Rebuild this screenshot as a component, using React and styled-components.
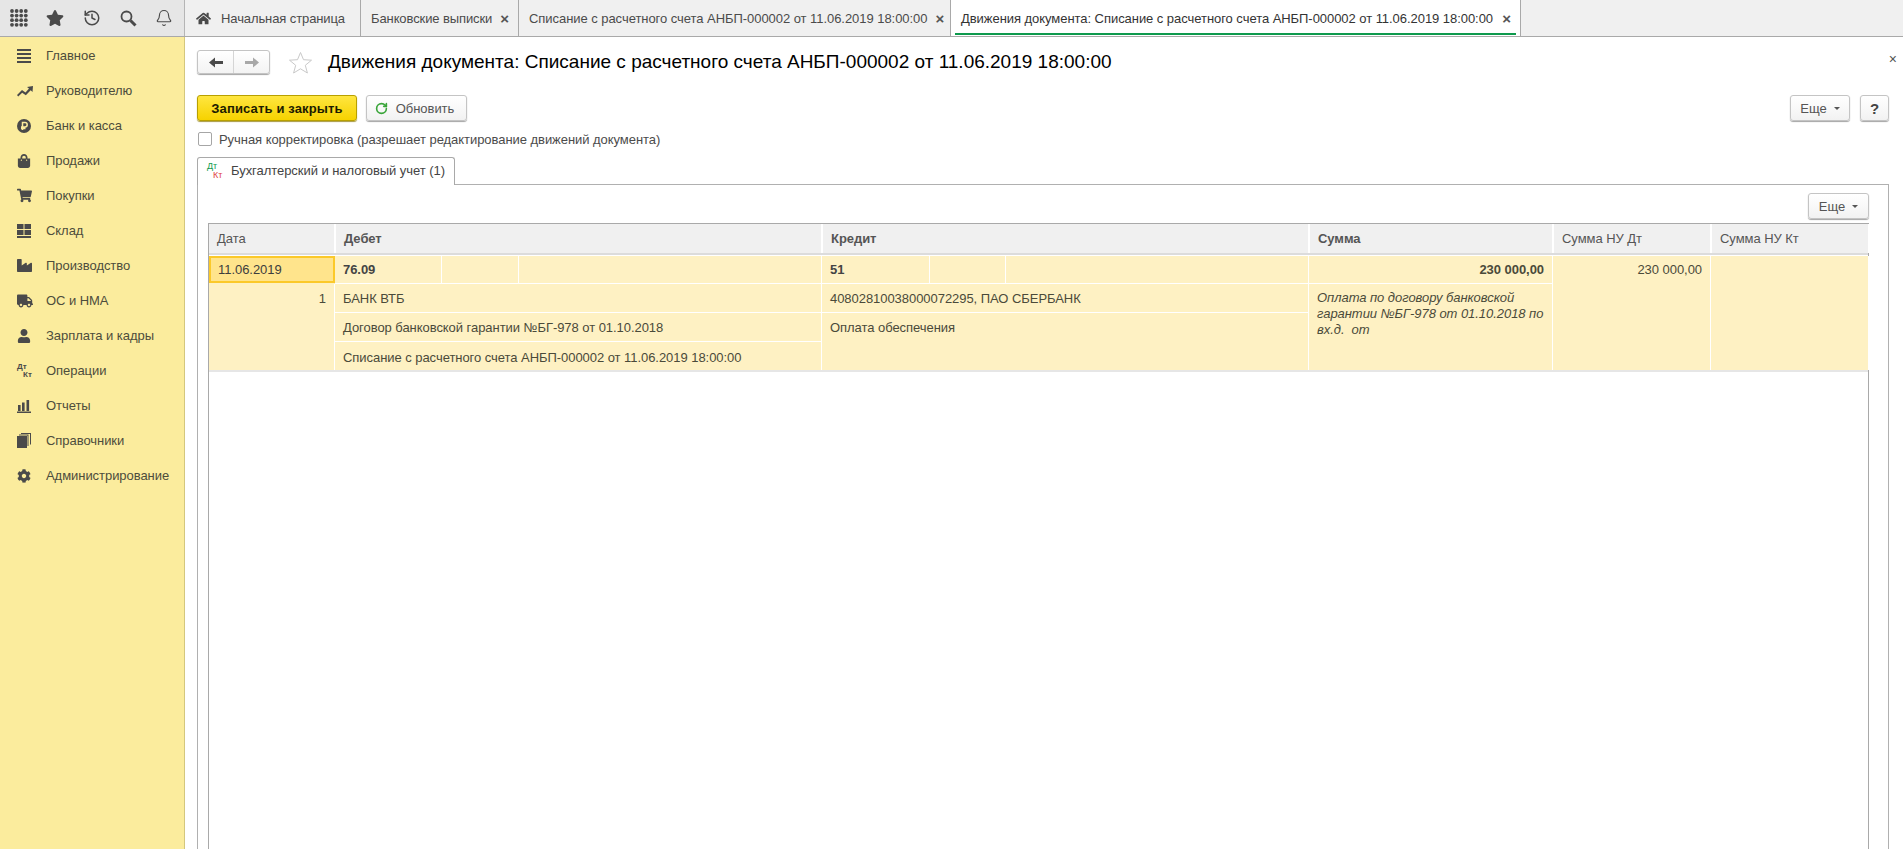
import React from 'react';
import styled, { createGlobalStyle } from 'styled-components';
import { FaStar, FaHome, FaShoppingBag, FaShoppingCart, FaIndustry, FaTruck, FaUser, FaCog } from 'react-icons/fa';
import { History, Bell, RotateCw } from 'lucide-react';

const Global = createGlobalStyle`
  html, body { margin: 0; padding: 0; height: 100%; overflow: hidden; background: #fff; }
  body { font-family: "Liberation Sans", Arial, sans-serif; font-size: 13px; letter-spacing: -.05px; color: #4b4b4b; }
  * { box-sizing: border-box; }
`;

const Page = styled.div`display: flex; flex-direction: column; width: 1903px; height: 849px; overflow: hidden;`;
const TopBar = styled.header`display: flex; height: 37px; flex: none; background: #f0f0f0; border-bottom: 1px solid #a9a9a9;`;
const QuickTools = styled.div`
  display: flex; align-items: center; width: 185px; flex: none; background: #e6e6e6; border-right: 1px solid #b5b5b5;
  padding: 0 0 0 10px; color: #4a4a4a;
`;
const ToolSlot = styled.span`display: flex; justify-content: center; align-items: center; width: ${p => p.$w}px; height: 36px;`;
const Tab = styled.div`
  position: relative; display: flex; align-items: center; width: ${p => p.$w}px; flex: none; height: 36px;
  padding: 0 9px 0 ${p => p.$pl}px; gap: ${p => p.$gap || 8}px; white-space: nowrap; color: #4b4b4b;
  background: ${p => (p.$active ? '#fff' : '#f0f0f0')}; border-right: 1px solid #a9a9a9;
  ${p => p.$active && 'color:#333;'}
`;
const TabLabel = styled.span`flex: 1; letter-spacing: ${p => p.$ls ?? -0.05}px;`;
const CloseMark = styled.span`font-size: 15px; font-weight: 700; color: #555; line-height: 1;`;
const ActiveLine = styled.span`position: absolute; left: 4px; right: 4px; bottom: 1px; height: 2px; background: #0e9a4d;`;

const Body = styled.div`display: flex; flex: 1; min-height: 0;`;
const Sidebar = styled.nav`width: 185px; flex: none; background: #fbec9d; border-right: 1px solid #d4c77d; padding-top: 1px;`;
const MenuItem = styled.div`display: flex; align-items: center; height: 35px; padding-left: 17px; color: #4d4d3c;`;
const MenuIcon = styled.span`display: flex; width: 29px; flex: none; color: #4a4a4a;`;
const DK = styled.span`
  display: inline-grid; flex: none; width: ${p => p.$size * 2 + 1}px; letter-spacing: 0;
  font: ${p => p.$weight} ${p => p.$size}px/${p => p.$size}px "Liberation Sans", sans-serif;
`;
const DKTop = styled.span`color: ${p => p.$c};`;
const DKBottom = styled.span`color: ${p => p.$c}; padding-left: ${p => p.$pad}px;`;

const Main = styled.main`position: relative; flex: 1; min-width: 0; padding: 13px 14px 0 12px; display: flex; flex-direction: column;`;
const TitleRow = styled.div`display: flex; align-items: center; height: 24px;`;
const NavGroup = styled.div`
  display: flex; width: 73px; height: 24px; border: 1px solid #c4c4c4; border-radius: 3px;
  background: linear-gradient(#fff, #f3f3f3); box-shadow: 0 1px 1px #a5a5a5;
`;
const NavButton = styled.span`
  display: flex; align-items: center; justify-content: center; flex: 1; color: ${p => p.$c};
  & + & { border-left: 1px solid #d5d5d5; }
`;
const StarSlot = styled.span`display: flex; margin: 0 15px 0 18px;`;
const Title = styled.h1`margin: 0; font-size: 19px; font-weight: 400; letter-spacing: 0; color: #000; white-space: nowrap;`;
const CloseForm = styled.span`position: absolute; top: 15px; right: 6px; font-size: 14px; color: #555; line-height: 1;`;

const CommandBar = styled.div`display: flex; align-items: center; gap: 9px; margin-top: 21px; height: 26px;`;
const Spacer = styled.span`flex: 1;`;
const Btn = styled.div`
  display: flex; align-items: center; justify-content: center; gap: ${p => p.$gap || 0}px; height: 26px; width: ${p => p.$w}px; flex: none;
  padding-right: ${p => p.$pr || 0}px;
  border: 1px solid #c4c4c4; border-radius: 3px; background: linear-gradient(#fff, #f2f2f2); box-shadow: 0 1px 1px #a5a5a5;
  color: #555;
`;
const PrimaryBtn = styled(Btn)`
  border-color: #b8a000; background: linear-gradient(#ffe640, #f6d200); box-shadow: 0 1px 1px #a89a40; color: #1c1c00; font-weight: 700; letter-spacing: .15px;
`;
const Help = styled(Btn)`font-size: 15px; font-weight: 700; color: #444; margin-left: 1px;`;
const Caret = styled.span`width: 0; height: 0; border: 3px solid transparent; border-top-color: #555; border-bottom: 0; margin-left: 7px;`;

const CheckRow = styled.label`display: flex; align-items: center; gap: 7px; margin: 11px 0 0 1px; height: 14px; color: #4b4b4b;`;
const CheckBox = styled.span`width: 14px; height: 14px; background: #fff; border: 1px solid #a6a6a6; border-radius: 2px;`;

const SectionTab = styled.div`
  position: relative; z-index: 1; display: flex; align-items: center; gap: 5px; width: 258px; height: 28px; margin: 11px 0 -1px; padding: 0 0 2px 9px;
  background: #fff; border: 1px solid #a9a9a9; border-bottom: 0; border-radius: 3px 3px 0 0; color: #444;
`;
const Panel = styled.section`flex: 1; min-height: 0; border: 1px solid #b0b0b0; border-bottom: 0; padding: 8px 19px 0 10px; display: flex; flex-direction: column;`;
const PanelTools = styled.div`display: flex; justify-content: flex-end; height: 26px;`;
const TableBox = styled.div`flex: 1; margin-top: 4px; border: 1px solid #a9a9a9; border-bottom: 0;`;
const columns = '126px 487px 487px 244px 158px 158px';
const HeaderRow = styled.div`display: grid; grid-template-columns: ${columns}; height: 31px; border-bottom: 2px solid #dcdcdc; background: #fff;`;
const HeadCell = styled.div`
  display: flex; align-items: center; padding: 0 0 1px 8px; background: #f0f0f0; border-right: 1px solid #fff; font-weight: ${p => (p.$b ? 700 : 400)};
  color: #555; border-left: 1px solid #fff; &:first-child { border-left: 0; }
`;
const RowGrid = styled.div`
  display: grid; grid-template-columns: ${columns}; grid-template-rows: 28px 29px 29px 28px; margin-top: 1px; background: #fef1c3;
  border-bottom: 2px solid #e6e6e6; height: 116px;
`;
const Cell = styled.div`
  grid-column: ${p => p.$col}; grid-row: ${p => p.$row}; background: #fef1c3; padding: ${p => p.$pt ?? 8}px 8px 0; color: #4a4a3a;
  border-right: 1px solid #fff; border-bottom: ${p => (p.$nb ? 0 : 1)}px solid #fff; line-height: ${p => (p.$i ? 16 : 14)}px;
  text-align: ${p => (p.$right ? 'right' : 'left')}; font-weight: ${p => (p.$b ? 700 : 400)}; font-style: ${p => (p.$i ? 'italic' : 'normal')};
`;
const DateCell = styled(Cell)`background: #ffe48c; border: 2px solid #fbc92a; padding: 5px 7px 0 7px; color: #3d3d3d; height: 27px;`;
const SubCols = styled.div`
  grid-column: ${p => p.$col}; grid-row: 1; display: grid; grid-template-columns: ${p => p.$t}; border-right: 1px solid #fff; border-bottom: 1px solid #fff;
`;
const SubCell = styled.div`padding: 7px 8px 0; font-weight: 700; color: #444; border-right: 1px solid #fff; line-height: 14px; &:last-child { border-right: 0; }`;

const Dk = ({ size, top, bottom, pad, weight = 700 }) => (
  <DK $size={size} $weight={weight}><DKTop $c={top}>Дт</DKTop><DKBottom $c={bottom} $pad={pad}>Кт</DKBottom></DK>
);
const S = ({ children, w = 14, h = 14 }) => (
  <svg width={w} height={h} viewBox={`0 0 ${w} ${h}`} fill="currentColor">{children}</svg>
);

const dots = [];
for (let y = 0; y < 4; y++) for (let x = 0; x < 4; x++) dots.push([2 + x * 4.6, 2 + y * 4.6]);

const menu = [
  ['Главное', <S><rect y="0" width="14" height="2" /><rect y="4" width="14" height="2" /><rect y="8" width="14" height="2" /><rect y="12" width="14" height="2" /></S>],
  ['Руководителю', <S w={16}><path d="M0 11 L5 6 L8.5 8.500 L12 4.500 L10 3 L16 2 L15.500 8 L13.700 6.200 L8.800 11.300 L5.200 8.800 L1.200 12.500Z" /></S>],
  ['Банк и касса', <S><circle cx="7" cy="7" r="7" /><path d="M5.500 11V3.500h2.500a2.200 2.200 0 0 1 0 4.400H4M4 9.500h4.500" fill="none" stroke="#fbec9d" strokeWidth="1.500" /></S>],
  ['Продажи', <FaShoppingBag size={14} />],
  ['Покупки', <FaShoppingCart size={15} />],
  ['Склад', <S><rect x="0" y="0" width="6.500" height="5" /><rect x="7.500" y="0" width="6.500" height="5" /><rect x="0" y="6" width="6.500" height="5" /><rect x="7.500" y="6" width="6.500" height="5" /><rect x="0" y="12" width="14" height="2" /></S>],
  ['Производство', <FaIndustry size={15} />],
  ['ОС и НМА', <FaTruck size={16} />],
  ['Зарплата и кадры', <FaUser size={14} />],
  ['Операции', <Dk size={8} top="#4a4a4a" bottom="#4a4a4a" pad={6} />],
  ['Отчеты', <S><rect x="1" y="6" width="2.600" height="6" /><rect x="5" y="3.500" width="2.600" height="8.500" /><rect x="9.500" y="1" width="2.600" height="11" /><rect x="0" y="12.500" width="14" height="1.500" /></S>],
  ['Справочники', <S h={15}><rect x="0" y="3" width="10" height="12" /><path d="M2 1.500h9.500V13h-1V2.500H2zM4 0h10v11.500h-1V1H4z" /></S>],
  ['Администрирование', <FaCog size={14} />],
];

const Tabs = [
  { w: 158, pl: 10, ls: -0.1, label: 'Банковские выписки' },
  { w: 432, pl: 10, label: 'Списание с расчетного счета АНБП-000002 от 11.06.2019 18:00:00' },
  { w: 570, pl: 10, label: 'Движения документа: Списание с расчетного счета АНБП-000002 от 11.06.2019 18:00:00', active: true },
];

export default function App() {
  return (
    <Page>
      <Global />
      <TopBar>
        <QuickTools>
          <ToolSlot $w={18}>
            <svg width="18" height="18" viewBox="0 0 18 18" fill="currentColor">
              {dots.map(([x, y]) => <circle key={`${x}-${y}`} cx={x} cy={y} r="1.900" />)}
            </svg>
          </ToolSlot>
          <ToolSlot $w={54}><FaStar size={18} /></ToolSlot>
          <ToolSlot $w={20}><History size={18} strokeWidth={2} /></ToolSlot>
          <ToolSlot $w={52}>
            <svg width="17" height="17" viewBox="0 0 17 17" fill="none" stroke="currentColor">
              <circle cx="6.500" cy="6.500" r="5" strokeWidth="1.800" /><path d="M10.500 10.500 L15.500 15.500" strokeWidth="3" />
            </svg>
          </ToolSlot>
          <ToolSlot $w={20}><Bell size={18} strokeWidth={1.5} /></ToolSlot>
        </QuickTools>
        <Tab $w={176} $pl={11} $gap={10}><FaHome size={15} color="#4a4a4a" /><TabLabel $ls={-0.1}>Начальная страница</TabLabel></Tab>
        {Tabs.map(t => (
          <Tab key={t.label} $w={t.w} $pl={t.pl} $active={t.active}>
            <TabLabel $ls={t.ls}>{t.label}</TabLabel>
            <CloseMark>×</CloseMark>
            {t.active && <ActiveLine />}
          </Tab>
        ))}
      </TopBar>
      <Body>
        <Sidebar>
          {menu.map(([label, icon]) => (
            <MenuItem key={label}><MenuIcon>{icon}</MenuIcon>{label}</MenuItem>
          ))}
        </Sidebar>
        <Main>
          <TitleRow>
            <NavGroup>
              <NavButton $c="#4a4a4a">
                <svg width="14" height="11" viewBox="0 0 14 11" fill="currentColor"><path d="M0 5.500 L6 0.500 V4 H14 V7 H6 V10.500Z" /></svg>
              </NavButton>
              <NavButton $c="#a8a8a8">
                <svg width="14" height="11" viewBox="0 0 14 11" fill="currentColor"><path d="M14 5.500 L8 0.500 V4 H0 V7 H8 V10.500Z" /></svg>
              </NavButton>
            </NavGroup>
            <StarSlot>
              <svg width="25" height="23" viewBox="0 0 25 23" fill="none" stroke="#c9c9c9">
                <path d="M12.500 1.500 L15.500 8.700 L23.500 9.200 L17.300 14.300 L19.400 22 L12.500 17.800 L5.600 22 L7.700 14.300 L1.500 9.200 L9.500 8.700Z" />
              </svg>
            </StarSlot>
            <Title>Движения документа: Списание с расчетного счета АНБП-000002 от 11.06.2019 18:00:00</Title>
          </TitleRow>
          <CloseForm>×</CloseForm>
          <CommandBar>
            <PrimaryBtn $w={160}>Записать и закрыть</PrimaryBtn>
            <Btn $w={101} $gap={8} $pr={4}><RotateCw size={13} color="#3aa53a" strokeWidth={3} />Обновить</Btn>
            <Spacer />
            <Btn $w={60}>Еще<Caret /></Btn>
            <Help $w={29}>?</Help>
          </CommandBar>
          <CheckRow><CheckBox />Ручная корректировка (разрешает редактирование движений документа)</CheckRow>
          <SectionTab><Dk size={9} top="#0e9a4d" bottom="#e0453f" pad={6} weight={400} />Бухгалтерский и налоговый учет (1)</SectionTab>
          <Panel>
            <PanelTools><Btn $w={61}>Еще<Caret /></Btn></PanelTools>
            <TableBox>
              <HeaderRow>
                <HeadCell>Дата</HeadCell>
                <HeadCell $b>Дебет</HeadCell>
                <HeadCell $b>Кредит</HeadCell>
                <HeadCell $b>Сумма</HeadCell>
                <HeadCell>Сумма НУ Дт</HeadCell>
                <HeadCell>Сумма НУ Кт</HeadCell>
              </HeaderRow>
              <RowGrid>
                <DateCell $col="1" $row="1">11.06.2019</DateCell>
                <Cell $col="1" $row="2 / 5" $right $nb>1</Cell>
                <SubCols $col="2" $t="107px 77px 1fr"><SubCell>76.09</SubCell><SubCell /><SubCell /></SubCols>
                <Cell $col="2" $row="2">БАНК ВТБ</Cell>
                <Cell $col="2" $row="3">Договор банковской гарантии №БГ-978 от 01.10.2018</Cell>
                <Cell $col="2" $row="4" $nb $pt={9}>Списание с расчетного счета АНБП-000002 от 11.06.2019 18:00:00</Cell>
                <SubCols $col="3" $t="108px 76px 1fr"><SubCell>51</SubCell><SubCell /><SubCell /></SubCols>
                <Cell $col="3" $row="2">40802810038000072295, ПАО СБЕРБАНК</Cell>
                <Cell $col="3" $row="3 / 5" $nb>Оплата обеспечения</Cell>
                <Cell $col="4" $row="1" $right $b $pt={7}>230 000,00</Cell>
                <Cell $col="4" $row="2 / 5" $i $nb $pt={6}>Оплата по договору банковской гарантии №БГ-978 от 01.10.2018 по вх.д.&nbsp; от</Cell>
                <Cell $col="5" $row="1 / 5" $right $nb $pt={7}>230 000,00</Cell>
                <Cell $col="6" $row="1 / 5" $nb />
              </RowGrid>
            </TableBox>
          </Panel>
        </Main>
      </Body>
    </Page>
  );
}
